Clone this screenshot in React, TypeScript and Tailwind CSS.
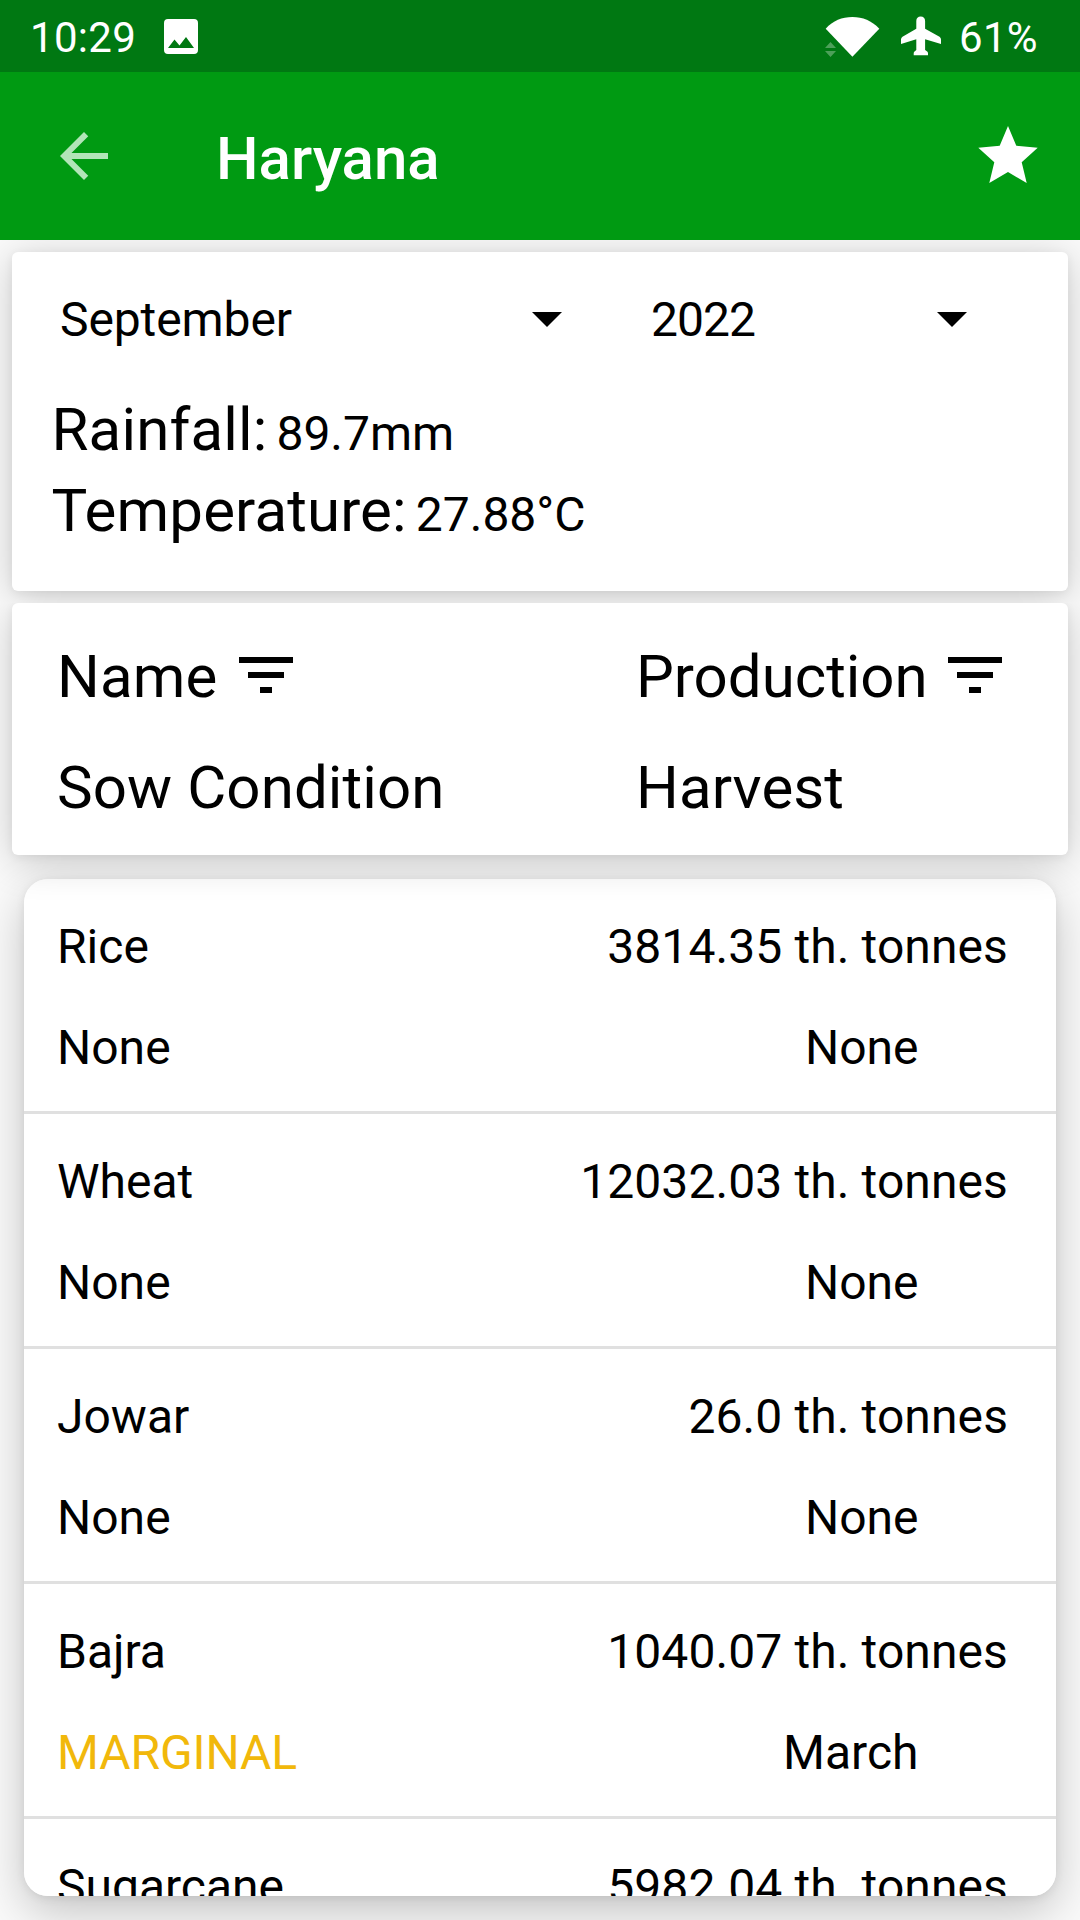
import React from "react";

type Crop = {
  name: string;
  production: string;
  sow: string;
  harvest: string;
  marginal?: boolean;
};

const crops: Crop[] = [
  { name: "Rice", production: "3814.35 th. tonnes", sow: "None", harvest: "None" },
  { name: "Wheat", production: "12032.03 th. tonnes", sow: "None", harvest: "None" },
  { name: "Jowar", production: "26.0 th. tonnes", sow: "None", harvest: "None" },
  { name: "Bajra", production: "1040.07 th. tonnes", sow: "MARGINAL", harvest: "March", marginal: true },
  { name: "Sugarcane", production: "5982.04 th. tonnes", sow: "None", harvest: "None" },
];

function StatusBar() {
  return (
    <div className="flex h-[72px] shrink-0 items-start bg-[#007812] pl-[30px] text-[42px] leading-[49px] text-white">
      <span className="w-[134px] pt-[13px] tracking-[0.3px]">10:29</span>
      <svg className="mt-[19px] h-[35px] w-[34px]" viewBox="0 0 34 35" fill="currentColor">
        <path
          fillRule="evenodd"
          d="M4 0H30Q34 0 34 4V31Q34 35 30 35H4Q0 35 0 31V4Q0 0 4 0ZM4 29H30L22 18L15.500 26.500L10.500 20.500Z"
        />
      </svg>
      <svg className="ml-[627px] mt-[17px] h-10 w-[55px]" viewBox="0 0 55 40" fill="currentColor">
        <path d="M.7 11.700C8 3.500 17 0 27.400 0S46.500 3.500 54.300 11.700L27.400 39.700Z" />
        <path d="M0 31L5.500 25L11 31ZM0 34H11L5.500 40Z" opacity=".3" />
      </svg>
      <svg className="ml-[21px] mt-[16px] h-10 w-10" viewBox="0 0 40 40" fill="currentColor">
        <path d="M15.300 5C15.300 2.300 17 .6 19.700 .6S24.100 2.300 24.100 5V12.800L38.500 20.800Q40 21.700 40 23.500V28L24.100 23.300V34L26.200 35.600Q27 36.300 27 37.500V39.300H12.700V37.500Q12.700 36.300 13.500 35.600L15.300 34V23.300L0 28V23.500Q0 21.700 1.500 20.800L15.300 12.800Z" />
      </svg>
      <span className="ml-[18px] pt-[13px] tracking-[0.3px]">61%</span>
    </div>
  );
}

function AppBar() {
  return (
    <div className="flex h-[168px] shrink-0 items-start bg-[#009a12] text-white">
      <svg className="ml-12 mt-12 h-[72px] w-[72px] text-[#b2e5b8]" viewBox="0 0 24 24" fill="currentColor">
        <path d="M20 11H7.830l5.590-5.590L12 4l-8 8 8 8 1.410-1.410L7.830 13H20v-2z" />
      </svg>
      <h1 className="ml-24 mt-[52px] text-[60px] font-medium leading-[70px]">Haryana</h1>
      <svg className="ml-auto mr-[42px] mt-[54px] h-[57px] w-[60px]" viewBox="0 0 60 57" fill="currentColor">
        <path d="M30 0L38.300 19.700L59.700 21.700L43.700 36.300L48.700 57L30 46L11.300 57L16.300 36.300L.3 21.700L21.700 19.700Z" />
      </svg>
    </div>
  );
}

function DropArrow() {
  return (
    <svg className="h-[72px] w-[72px]" viewBox="0 0 24 24">
      <path d="M7 10l5 5 5-5z" />
    </svg>
  );
}

function FilterIcon() {
  return (
    <svg className="h-[72px] w-[72px]" viewBox="0 0 24 24">
      <path d="M10 18h4v-2h-4v2zM3 6v2h18V6H3zm3 7h12v-2H6v2z" />
    </svg>
  );
}

function Reading({ label, value }: { label: string; value: string }) {
  return (
    <div className="flex h-[81px] items-baseline">
      <span className="text-[60px] leading-[70px] tracking-[0.15px]">{label}</span>
      <span className="ml-[9px] text-[48px] leading-[56px]">{value}</span>
    </div>
  );
}

function WeatherCard() {
  return (
    <section className="relative z-20 mx-3 mt-3 h-[339px] shrink-0 rounded-[6px] bg-white shadow-[0_6px_40px_rgba(0,0,0,0.2),0_2px_10px_rgba(0,0,0,0.06)] [clip-path:inset(-12px)]">
      <div className="flex h-[143px] pt-[30px]">
        <div className="ml-12 flex w-[523px] items-start">
          <span className="mt-[10px] w-[451px] text-[48px] leading-[56px] tracking-[-0.1px]">September</span>
          <DropArrow />
        </div>
        <div className="ml-[68px] flex items-start">
          <span className="mt-[10px] w-[265px] text-[48px] leading-[56px] tracking-[-1px]">2022</span>
          <DropArrow />
        </div>
      </div>
      <div className="ml-[39.500px]">
        <Reading label="Rainfall:" value="89.7mm" />
        <Reading label="Temperature:" value="27.88°C" />
      </div>
    </section>
  );
}

function HeadingsCard() {
  return (
    <section className="relative z-10 mx-3 mt-3 grid h-[252px] shrink-0 grid-cols-[579px_1fr] grid-rows-[111px_1fr] rounded-[6px] bg-white pl-[45px] pt-[39px] text-[60px] leading-[70px] shadow-[0_6px_40px_rgba(0,0,0,0.2),0_2px_10px_rgba(0,0,0,0.06)] [clip-path:inset(0_-12px_-60px_-12px)]">
      <div className="flex">
        <span className="w-[173px] tracking-[0.15px]">Name</span>
        <div className="-mt-[3px]">
          <FilterIcon />
        </div>
      </div>
      <div className="flex">
        <span className="w-[303px]">Production</span>
        <div className="-mt-[3px]">
          <FilterIcon />
        </div>
      </div>
      <span className="tracking-[0.1px]">Sow Condition</span>
      <span className="tracking-[0.1px]">Harvest</span>
    </section>
  );
}

function CropRow({ crop }: { crop: Crop }) {
  return (
    <li className="h-[235px] shrink-0 border-b-[3px] border-[#e0e0e0] pl-[33px] pr-[48px] pt-[40px] text-[48px] leading-[56px]">
      <div className="flex h-[101px] justify-between">
        <span>{crop.name}</span>
        <span className="tracking-[0.1px]">{crop.production}</span>
      </div>
      <div className="flex justify-between pr-[89.500px]">
        <span className={crop.marginal ? "tracking-[-0.1px] text-[#f1b80b]" : ""}>{crop.sow}</span>
        <span>{crop.harvest}</span>
      </div>
    </li>
  );
}

export default function App() {
  return (
    <main className="flex h-[1920px] w-[1080px] flex-col overflow-hidden bg-[#fafafa] font-['Roboto',sans-serif] text-black">
      <StatusBar />
      <AppBar />
      <WeatherCard />
      <HeadingsCard />
      <div className="mx-6 mt-6 h-[1017px] shrink-0 rounded-[24px] shadow-[0_16px_48px_rgba(0,0,0,0.22),0_2px_10px_rgba(0,0,0,0.08)]">
        <ul className="flex h-full flex-col overflow-hidden rounded-[24px] bg-white">
          {crops.map((crop) => (
            <CropRow key={crop.name} crop={crop} />
          ))}
        </ul>
      </div>
    </main>
  );
}
